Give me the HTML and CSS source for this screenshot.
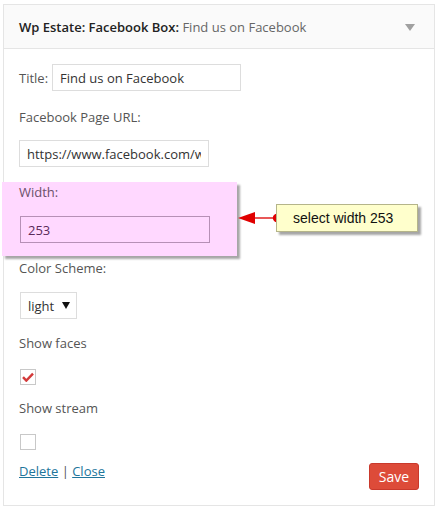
FILE: index.html
```html
<!DOCTYPE html>
<html>
<head>
<meta charset="utf-8">
<link rel="stylesheet" href="styles.css">
</head>
<body>
<div class="widget">
  <div class="widget-top">
    <h3 class="widget-title">Wp Estate: Facebook Box:<span class="in-title"> Find us on Facebook</span></h3>
    <svg class="toggle" width="10" height="7" viewBox="0 0 10 7"><path d="M0 0h10L5 7z" fill="#a0a0a0"/></svg>
  </div>
  <div class="widget-inside">
    <div class="row-inline">
      <label class="lbl">Title:</label>
      <input class="field field-title" type="text" value="Find us on Facebook">
    </div>
    <label class="lbl block gap-top">Facebook Page URL:</label>
    <input class="field field-url" type="text" value="https://www.facebook.com/wpestate">

    <div class="highlight">
      <label class="lbl block">Width:</label>
      <input class="field field-width" type="text" value="253">
      <svg class="pointer" width="44" height="14" viewBox="0 0 44 14"><path d="M17 7H39" stroke="#e02020" stroke-width="1.5"/><path d="M0 7L17 1V13Z" fill="#e00000"/><circle cx="39" cy="7" r="4.2" fill="#e00000"/></svg>
      <div class="callout">select width 253</div>
    </div>

    <label class="lbl block gap-top-s">Color Scheme:</label>
    <div class="select-box"><span>light</span><svg width="8" height="7" viewBox="0 0 8 7"><path d="M0 0h8L4 7z" fill="#111"/></svg></div>

    <label class="lbl block gap-top-f">Show faces</label>
    <span class="check checked"><svg width="12" height="10" viewBox="0 0 12 10"><path d="M1 5.2L4.3 8.6 11 1.6" fill="none" stroke="#d33a3a" stroke-width="2.4"/></svg></span>

    <label class="lbl block gap-top-m">Show stream</label>
    <span class="check"></span>

    <div class="actions">
      <div class="links"><a href="#">Delete</a> | <a href="#">Close</a></div>
      <button class="save">Save</button>
    </div>
  </div>
</div>
</body>
</html>
```
FILE: styles.css
```css
html, body { margin: 0; padding: 0; background: #fff; }
body { font-family: "Open Sans", "DejaVu Sans", sans-serif; font-size: 13px; color: #444; }

.widget {
  margin: 4px 0 0 3px;
  width: 430px;
  border: 1px solid #e5e5e5;
  background: #fff;
}
.widget-top {
  height: 43px;
  background: #fafafa;
  border-bottom: 1px solid #e5e5e5;
  display: flex;
  align-items: center;
  justify-content: space-between;
  padding: 0 19px 0 15px;
}
.widget-title {
  margin: 0;
  font-size: 13px;
  font-weight: 600;
  color: #222;
}
.in-title { font-weight: 400; color: #666; }
.toggle { margin-top: 2px; }

.widget-inside { padding: 15px 15px 15px; }

.lbl { line-height: 20px; color: #555; }
.block { display: block; }
.gap-top { margin-top: 16px; margin-bottom: 13px; }
.gap-top-s { margin-top: 2px; margin-bottom: 14px; }
.gap-top-f { margin-top: 14px; margin-bottom: 16px; }
.gap-top-m { margin-top: 13px; margin-bottom: 16px; }

.row-inline { display: flex; align-items: center; gap: 4px; }

.field {
  box-sizing: border-box;
  height: 27px;
  border: 1px solid #ddd;
  font-family: inherit;
  font-size: 13px;
  color: #333;
  padding: 0 7px;
  background: #fff;
  display: block;
  outline: none;
  margin: 0;
}
.field-title { width: 189px; }
.field-url { width: 190px; }

.highlight {
  position: relative;
  margin: 15px 0 0 -17px;
  width: 218px;
  padding: 0 0 13px 17px;
  background: #ffd8ff;
  box-shadow: 3px 3px 2px rgba(0,0,0,0.35);
}
.highlight .lbl { color: #6a506a; margin-bottom: 14px; }
.field-width {
  width: 190px;
  background: transparent;
  border-color: #b690b6;
  color: #5a2a5a;
  margin-left: 1px;
}
.pointer { position: absolute; left: 236px; top: 29px; }
.callout {
  position: absolute;
  left: 274px;
  top: 22px;
  width: 124px;
  height: 26px;
  padding-left: 16px;
  background: #ffffcc;
  border: 1px solid #b5b58a;
  box-shadow: 3px 3px 2px rgba(0,0,0,0.35);
  font-family: "Liberation Sans", Arial, sans-serif;
  font-size: 14px;
  line-height: 26px;
  color: #111;
}

.select-box {
  box-sizing: border-box;
  width: 57px;
  height: 27px;
  margin-left: 1px;
  border: 1px solid #ddd;
  display: flex;
  align-items: center;
  justify-content: space-between;
  padding: 0 6px 0 7px;
  color: #333;
}

.check {
  box-sizing: border-box;
  display: flex;
  align-items: center;
  justify-content: center;
  width: 16px;
  height: 16px;
  margin-left: 1px;
  border: 1px solid #c8c8c8;
  background: #fff;
}

.actions {
  display: flex;
  justify-content: space-between;
  align-items: flex-start;
  margin-top: 11px;
}
.links { line-height: 20px; color: #555; }
.links a { color: #21759b; text-decoration: underline; }
.save {
  margin-top: 2px;
  width: 50px;
  height: 27px;
  border: 1px solid #c9392c;
  border-radius: 3px;
  background: #dd4b39;
  color: #fff;
  font-family: inherit;
  font-size: 14px;
  padding: 0;
}
```
